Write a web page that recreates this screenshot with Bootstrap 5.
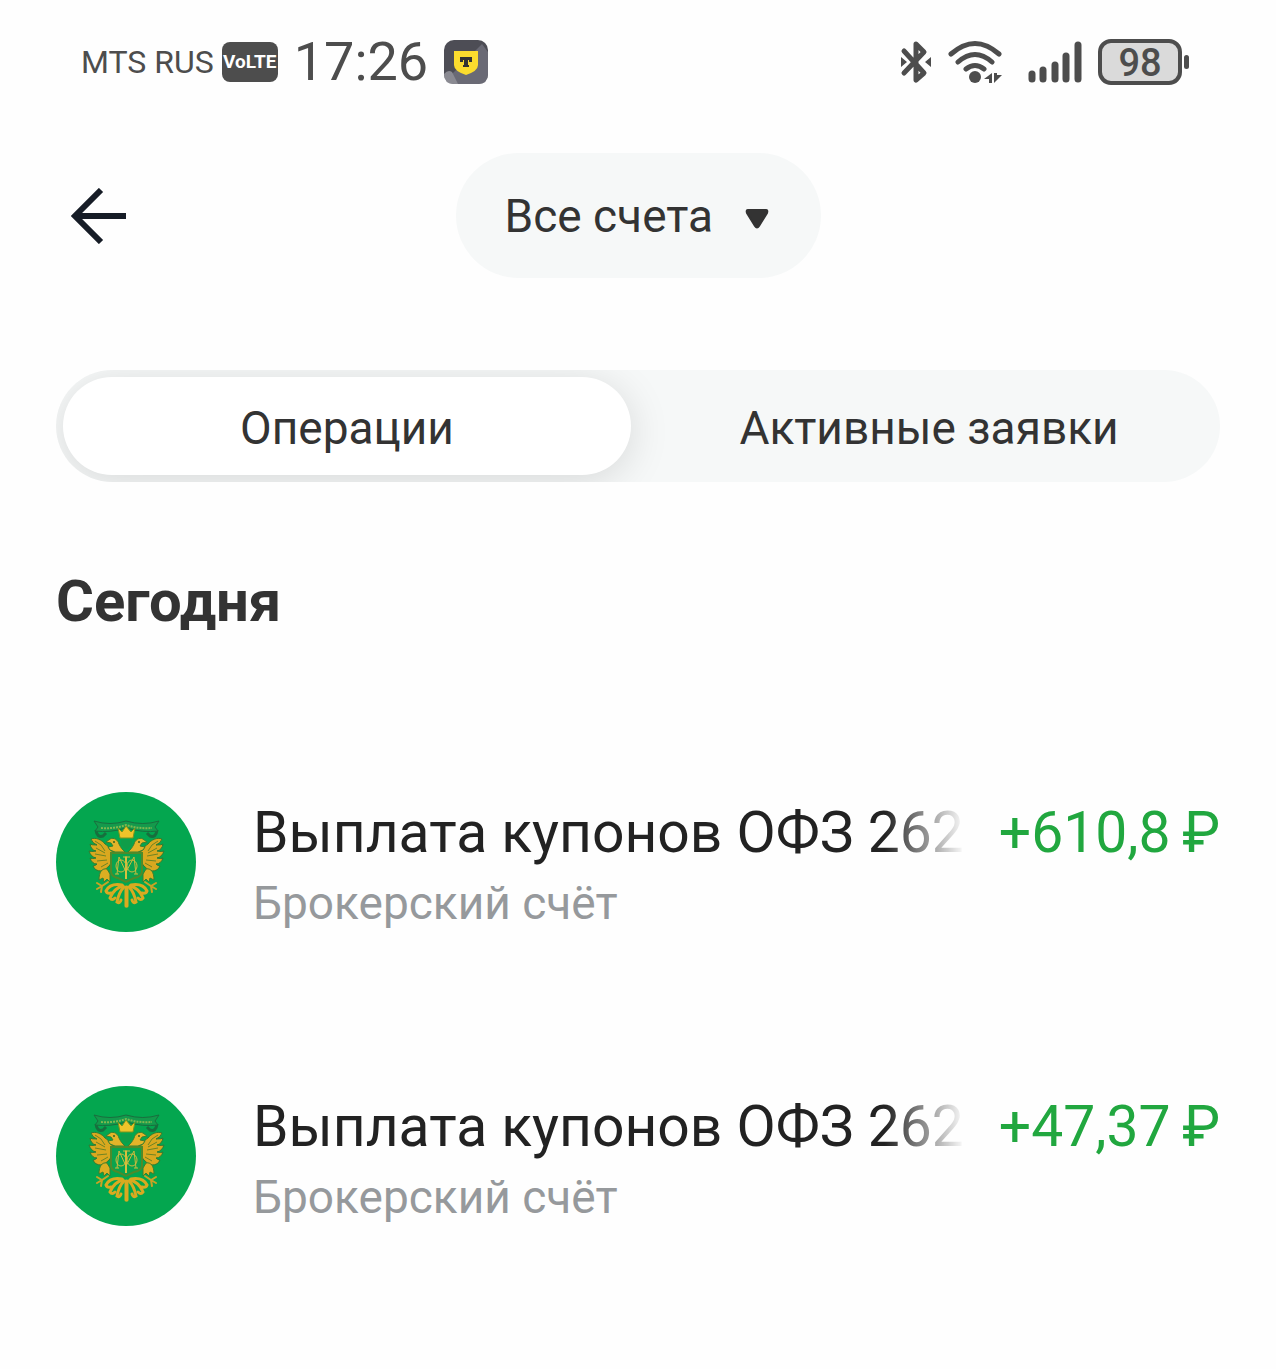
<!DOCTYPE html>
<html lang="ru">
<head>
<meta charset="utf-8">
<meta name="viewport" content="width=device-width, initial-scale=1">
<title>Операции</title>
<link href="https://cdn.jsdelivr.net/npm/bootstrap@5.3.0/dist/css/bootstrap.min.css" rel="stylesheet">
<style>
  body { font-family: Roboto, "Noto Sans", sans-serif; background: #fefefe; color: #333; }
  .status-bar { height: 124px; padding: 0 87px 0 81px; color: #4d4d4d; }
  .carrier { font-size: 32px; line-height: 40px; }
  .volte { width: 56px; height: 40px; border-radius: 8px; background: #4d4d4d; color: #fff; font-size: 19px; font-weight: 700; }
  .clock { font-size: 54px; line-height: 60px; }
  .battery { width: 84px; height: 46px; border: 4px solid #4d4d4d; border-radius: 13px; background: #dadada; font-size: 38px; font-weight: 500; line-height: 40px; }
  .battery-tip { width: 5px; height: 14px; margin-left: 2px; border-radius: 3px; background: #4d4d4d; }
  .page-main { padding: 0 56px; }
  .top-row { display: grid; grid-template-columns: 1fr auto 1fr; padding-top: 29px; }
  .back-btn { justify-self: start; padding: 14px; border: 0; line-height: 0; }
  .account-select { appearance: none; height: 125px; padding: 2px 107px 0 49px; border: 0; border-radius: 63px; background: #f6f8f8; color: #333; font-size: 46px; }
  .account-caret { right: 51px; top: 55px; pointer-events: none; }
  .segments { gap: 14px; margin-top: 92px; padding: 7px; border-radius: 56px; background: #f6f8f8; overflow: hidden; }
  .segments .nav-link { height: 98px; border-radius: 49px; padding: 4px 0 0; color: #333; font-size: 46px; line-height: 56px; }
  .segments .nav-link.active { background: #fff; color: #333; box-shadow: 0 6px 40px rgba(0, 0, 0, .13); }
  .day-title { margin: 84px 0 0; font-size: 58px; line-height: 70px; font-weight: 700; }
  .operations { margin-top: 156px; display: grid; grid-template-columns: minmax(0, 1fr); gap: 154px; }
  .operation { gap: 57px; height: 140px; }
  .op-title, .op-amount { font-size: 57px; line-height: 70px; white-space: nowrap; }
  .op-title { color: #222; overflow: hidden;
    -webkit-mask-image: linear-gradient(to left, transparent 0, #000 80px); mask-image: linear-gradient(to left, transparent 0, #000 80px); }
  .op-amount { color: #21a73f; }
  .op-line { gap: 34px; margin-top: 6px; }
  .op-account { font-size: 46px; line-height: 56px; margin-top: 7px; color: #96999c; }
</style>
</head>
<body>
<svg width="0" height="0" class="d-block" aria-hidden="true">
  <defs>
    <g id="eagle-half">
      <path d="M59 59C53 61 54 54 49 52C46 48 40 45 35 47Q36 51 41 53Q35 53 34 52Q35 58 40 59Q35 60 33 59Q35 65 40 66Q36 67 34 66Q36 72 41 72Q39 74 37 74Q39 79 45 79Q50 78 54 73Z" fill="#d9a81f" stroke="#2f7a31" stroke-width="1"/>
      <path d="M39 49Q46 52 49 59M40 56L49 61M39 62L50 64M41 69L51 68M45 75L52 71" stroke="#6d8424" stroke-width="1" fill="none"/>
      <path d="M69 60C66 57 65 56 63 52C62 48 58 45 54 47L50 50L55 51L57 54L52 55L54 58L59 60Z" fill="#e3b429" stroke="#3d7f2e" stroke-width="1"/>
      <circle cx="58" cy="50" r="1" fill="#35641f"/>
      <path d="M51 77C46 76 43 80 43 88L47 86L48 90L51 87L54 90L54 82Z" fill="#dcae22" stroke="#3d7f2e" stroke-width="1"/>
      <path d="M52 90L46 94L41 91M46 94L41 97M46 94L45 100" stroke="#c9a324" stroke-width="2" fill="none" stroke-linecap="round"/>
      <g fill="none" stroke="#d9aa20" stroke-width="3" stroke-linecap="round">
        <path d="M66 93Q54 91 50 99Q51 102 55 101"/>
        <path d="M67 94Q58 96 54 106Q56 109 59 106"/>
        <path d="M68 95Q63 100 61 110Q64 112 65 108"/>
        <path d="M70 95V114"/>
      </g>
      <path d="M40 38Q41 46 47 44L50 41" stroke="#176f3d" stroke-width="3" fill="none"/>
    </g>
    <symbol id="eagle" viewBox="0 0 140 140">
      <circle cx="70" cy="70" r="70" fill="#04a64f"/>
      <use href="#eagle-half"/>
      <use href="#eagle-half" transform="translate(141 0) scale(-1 1)"/>
      <path d="M38 29Q54 34 70 29Q87 34 103 29L99 35L102 39Q87 41 70 36Q54 41 39 39L42 35Z" fill="#149a4c" stroke="#1a6e3e" stroke-width="1"/>
      <path d="M45 36Q58 37 70 33Q83 37 96 36" fill="none" stroke="#7fb750" stroke-width="2" stroke-dasharray="2 1"/>
      <path d="M62 36L66 40L70 34L75 40L79 36L77 46H64Z" fill="#efc42a" stroke="#7b931c" stroke-width="1"/>
      <path d="M65 48H76V53L70 58L65 53Z" fill="#109d49"/>
      <path d="M55 61H86V80Q85 85 78 86L70 90L62 86Q56 85 55 80Z" fill="#0aa34e" stroke="#4f8a2a" stroke-width="2"/>
      <path d="M70 64V87M67 65H74M61 82L63 65L70 80L78 65L80 82M59 82H63M78 82H82" fill="none" stroke="#cdbb3c" stroke-width="1"/>
      <path d="M70 65V87" stroke="#d8c040" stroke-width="2"/>
      <ellipse cx="65" cy="74" rx="5" ry="6" fill="none" stroke="#cdbb3c" stroke-width="1"/>
      <ellipse cx="76" cy="74" rx="5" ry="6" fill="none" stroke="#cdbb3c" stroke-width="1"/>
    </symbol>
  </defs>
</svg>

<div class="status-bar d-flex align-items-center justify-content-between">
  <div class="d-flex align-items-center">
    <span class="carrier">MTS RUS</span>
    <span class="volte d-flex align-items-center justify-content-center ms-2">VoLTE</span>
    <span class="clock ms-3">17:26</span>
    <svg class="ms-3" width="44" height="44" viewBox="0 0 44 44" aria-hidden="true">
      <rect width="44" height="44" rx="10" fill="#4d4d55"/>
      <path d="M38 4L44 12V34Q44 44 34 44H12L8 34Z" fill="#6a6a75"/>
      <path d="M0 34Q4 29 8 32L14 44H10Q0 44 0 34Z" fill="#8a8a92"/>
      <path d="M10 11H34V25Q34 31 22 35Q10 31 10 25Z" fill="#fbdc2e"/>
      <path d="M16 17H28V22H25V20H24V25H25V27H19V25H20V20H19V22H16Z" fill="#333"/>
    </svg>
  </div>
  <div class="d-flex align-items-center">
    <svg width="32" height="44" viewBox="0 0 32 44" fill="none" stroke="#4d4d4d" stroke-width="5" stroke-linejoin="round" stroke-linecap="round" aria-hidden="true">
      <path d="M4 11L24 33L16 40V4L24 12L4 33"/>
      <path d="M1 17L7 22L1 27ZM31 17L25 22L31 27Z" fill="#4d4d4d" stroke="none"/>
    </svg>
    <svg class="ms-3" width="54" height="44" viewBox="0 0 54 44" fill="none" stroke="#4d4d4d" stroke-width="5" stroke-linecap="round" aria-hidden="true">
      <path d="M3 14Q27 -7 51 14M10 22Q27 7 44 22M18 29Q27 22 36 29"/>
      <circle cx="27" cy="37" r="6" fill="#4d4d4d" stroke="none"/>
      <path d="M44 33V43H41V39H36ZM46 43V33H49V35H54Z" fill="#4d4d4d" stroke="none"/>
    </svg>
    <svg class="ms-4" width="56" height="44" viewBox="0 0 56 44" stroke="#4d4d4d" stroke-width="7" stroke-linecap="round" aria-hidden="true">
      <path d="M6 34V39M17 30V39M29 25V39M40 16V39M52 5V39"/>
    </svg>
    <span class="battery d-block text-center ms-3">98</span>
    <span class="battery-tip"></span>
  </div>
</div>

<main class="page-main">
  <header class="top-row align-items-center">
    <button type="button" class="btn back-btn" aria-label="Назад">
      <svg width="56" height="56" viewBox="0 0 56 56" fill="none" stroke="#161c26" stroke-width="6" aria-hidden="true">
        <path d="M56 28H5M31 2L5 28L31 54"/>
      </svg>
    </button>
    <div class="position-relative">
      <select class="account-select" aria-label="Счёт"><option>Все счета</option></select>
      <svg class="account-caret position-absolute" width="26" height="22" viewBox="0 0 26 22" aria-hidden="true">
        <path d="M4 2H22Q24 2 23 5L15 18Q13 21 11 18L3 5Q2 2 4 2Z" fill="#333" stroke="#333" stroke-width="2"/>
      </svg>
    </div>
  </header>

  <div class="segments nav nav-pills nav-fill flex-nowrap" role="tablist">
    <button type="button" class="nav-link active w-50" role="tab" aria-selected="true">Операции</button>
    <button type="button" class="nav-link w-50" role="tab" aria-selected="false">Активные заявки</button>
  </div>

  <h2 class="day-title">Сегодня</h2>

  <ul class="operations list-unstyled mb-0">
    <li class="operation d-flex">
      <svg class="flex-shrink-0" width="140" height="140" aria-hidden="true"><use href="#eagle"/></svg>
      <div class="flex-grow-1 overflow-hidden">
        <div class="op-line d-flex">
          <div class="op-title flex-grow-1">Выплата купонов ОФЗ 262</div>
          <div class="op-amount">+610,8&thinsp;₽</div>
        </div>
        <div class="op-account">Брокерский счёт</div>
      </div>
    </li>
    <li class="operation d-flex">
      <svg class="flex-shrink-0" width="140" height="140" aria-hidden="true"><use href="#eagle"/></svg>
      <div class="flex-grow-1 overflow-hidden">
        <div class="op-line d-flex">
          <div class="op-title flex-grow-1">Выплата купонов ОФЗ 262</div>
          <div class="op-amount">+47,37&thinsp;₽</div>
        </div>
        <div class="op-account">Брокерский счёт</div>
      </div>
    </li>
  </ul>
</main>
<script src="https://cdn.jsdelivr.net/npm/bootstrap@5.3.0/dist/js/bootstrap.bundle.min.js"></script>
</body>
</html>
